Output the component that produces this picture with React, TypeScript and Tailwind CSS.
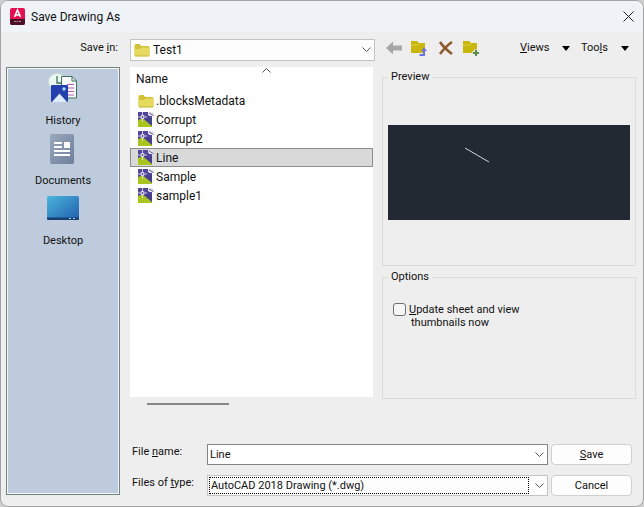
import React from 'react'

const FolderIcon: React.FC<{ className?: string }> = ({ className = '' }) => (
  <svg viewBox="0 0 16 14" className={`w-4 h-[14px] shrink-0 ${className}`} aria-hidden="true">
    <path d="M0.5 2.5Q0.5 1 2 1H5.5L7.3 3H14Q15.5 3 15.5 4.5V12Q15.5 13 14.5 13H1.5Q0.5 13 0.5 12Z" fill="#d2c235" />
    <path d="M0.5 6H6L7.8 4.4H15.5V12Q15.5 13.3 14.3 13.3H1.7Q0.5 13.3 0.5 12Z" fill="#e6da60" />
    <path d="M1 13H15" stroke="#c9b93a" strokeWidth="1" />
  </svg>
)

const DwgIcon: React.FC = () => (
  <svg viewBox="0 0 16 16" className="w-4 h-4 shrink-0" aria-hidden="true">
    <path d="M0 0H10V3H14V15H0Z" fill="#51479a" />
    <path d="M0 8L5 6.5L14 14V15H0Z" fill="#a9c41f" />
    <path d="M5 6L14 6.5V13.5Z" fill="#483f8c" />
    <path d="M4.5 0V10M0 5H9" stroke="#e9e8f4" strokeWidth="0.8" />
    <rect x="3.2" y="3.7" width="2.6" height="2.6" fill="#51479a" stroke="#fff" strokeWidth="0.8" />
    <path d="M10 0H14.5L16 1.5V4H11Z" fill="#e4e3ee" />
    <path d="M11 1L15.5 3.5" stroke="#6661a6" strokeWidth="1" />
  </svg>
)

const AppIcon: React.FC = () => (
  <svg viewBox="0 0 15 17" className="w-[15px] h-[17px]" aria-hidden="true">
    <rect width="15" height="17" rx="2" fill="#e51050" />
    <path d="M0 11H15V15Q15 17 13 17H2Q0 17 0 15Z" fill="#4c1026" />
    <path d="M4.5 9L7.5 2L10.5 9M5.5 7H9.5" fill="none" stroke="#fff" strokeWidth="1.6" />
    <path d="M4 13.5H11" stroke="#b0859a" strokeWidth="1.2" strokeDasharray="2 0.5" />
  </svg>
)

const HistoryIcon: React.FC = () => (
  <svg viewBox="0 0 32 32" className="w-8 h-8" aria-hidden="true">
    <circle cx="10" cy="9" r="8.5" fill="#eef8f3" stroke="#c8dcd8" />
    <path d="M10 3V10H14" fill="none" stroke="#3c7552" strokeWidth="1.3" />
    <path d="M14.5 3.5H25L29.5 8V25H14.5Z" fill="#f8fbfa" stroke="#39705c" />
    <path d="M25 3.5V8H29.5" fill="none" stroke="#39705c" />
    <path d="M20 11.5H27M20 15H27M20 18.5H27M20 22H27" stroke="#bc59b5" strokeWidth="1.1" />
    <rect x="4" y="12" width="17" height="17" rx="1" fill="#243fae" />
    <path d="M5 29L12.5 20.5L20 29Z" fill="#dcecfb" />
    <circle cx="17" cy="16" r="1.7" fill="#a9d7fa" />
  </svg>
)

const DocumentsIcon: React.FC = () => (
  <svg viewBox="0 0 32 32" className="w-8 h-8" aria-hidden="true">
    <defs>
      <linearGradient id="doc" x1="0" y1="0" x2="1" y2="1">
        <stop stopColor="#9aa9bd" />
        <stop offset="1" stopColor="#6f7f9c" />
      </linearGradient>
    </defs>
    <rect x="3" y="1" width="24" height="30" rx="2" fill="url(#doc)" />
    <path d="M7 10H15M7 14H15M7 18H23M7 22H23" stroke="#fff" strokeWidth="2" />
    <rect x="17" y="9" width="6" height="6" fill="#fff" />
  </svg>
)

const DesktopIcon: React.FC = () => (
  <svg viewBox="0 0 32 32" className="w-8 h-8" aria-hidden="true">
    <defs>
      <linearGradient id="desk" x1="0" y1="0" x2="1" y2="1">
        <stop stopColor="#4db4dc" />
        <stop offset="1" stopColor="#1f5fae" />
      </linearGradient>
    </defs>
    <rect x="0" y="3" width="32" height="24" rx="1.5" fill="url(#desk)" />
    <path d="M0 24.5H32V25.5Q32 27 30.5 27H1.5Q0 27 0 25.5Z" fill="#153f70" />
    <path d="M22 25.5H24M26 25.5H28" stroke="#a4d6f4" />
  </svg>
)

const Chevron: React.FC = () => (
  <svg viewBox="0 0 9 6" className="w-[9px] h-[6px]" aria-hidden="true">
    <path d="M0.5 0.5L4.5 4.5L8.5 0.5" fill="none" stroke="#555" strokeWidth="1" />
  </svg>
)

const DropArrow: React.FC = () => (
  <svg viewBox="0 0 8 5" className="w-2 h-[5px]" aria-hidden="true">
    <path d="M0 0H8L4 5Z" fill="#000" />
  </svg>
)

const places = [
  { name: 'History', icon: <HistoryIcon /> },
  { name: 'Documents', icon: <DocumentsIcon /> },
  { name: 'Desktop', icon: <DesktopIcon /> },
]

const files = [
  { name: '.blocksMetadata', folder: true },
  { name: 'Corrupt' },
  { name: 'Corrupt2' },
  { name: 'Line', selected: true },
  { name: 'Sample' },
  { name: 'sample1' },
]

const Toolbar: React.FC = () => (
  <div className="flex items-start h-[35px] pt-[7px] pr-2">
    <label htmlFor="saveIn" className="w-[129px] pr-3 pt-px text-right">
      Save <u>i</u>n:
    </label>
    <div className="relative flex-1">
      <select
        id="saveIn"
        className="block w-full h-[22px] pl-[22px] pr-6 appearance-none rounded-none bg-[#fdfdfd] border border-[#c4c4c4] text-[12px] leading-4"
      >
        <option>Test1</option>
      </select>
      <FolderIcon className="absolute left-1 top-1 pointer-events-none" />
      <span className="absolute right-1 top-2 pointer-events-none"><Chevron /></span>
    </div>
    <div className="flex items-center w-[260px] h-[18px] pl-[11px]">
      <button aria-label="Back" className="w-4">
        <svg viewBox="0 0 16 14" className="w-4 h-[14px]">
          <path d="M0 7L7 0.5V4.5H16V9.5H7V13.5Z" fill="#a7a7a7" />
        </svg>
      </button>
      <button aria-label="Up one level" className="w-4 ml-[9px]">
        <svg viewBox="0 0 16 17" className="w-4 h-[17px]">
          <path d="M0 1H6L8 3H14V13H0Z" fill="#c8b60c" />
          <path d="M0 5H7L9 3.5" stroke="#ddcd3b" fill="none" />
          <path d="M8.5 15H13V10" fill="none" stroke="#6c70e0" strokeWidth="2" />
          <path d="M10 11L13 7.5L16 11Z" fill="#6c70e0" />
        </svg>
      </button>
      <button aria-label="Delete" className="w-4 ml-[11px]">
        <svg viewBox="0 0 16 16" className="w-4 h-4">
          <path d="M2 2Q6 8 14 14M14 2Q8 6 2 14" fill="none" stroke="#8c5a2b" strokeWidth="2.6" />
        </svg>
      </button>
      <button aria-label="Create new folder" className="w-4 ml-[9px]">
        <svg viewBox="0 0 16 17" className="w-4 h-[17px]">
          <path d="M0 1H6L8 3H14V13H0Z" fill="#c8b60c" />
          <path d="M0 5H7L9 3.5" stroke="#ddcd3b" fill="none" />
          <path d="M13 9.5V16.5M9.5 13H16.5" stroke="#eeeeee" strokeWidth="4" />
          <path d="M13 10V16M10 13H16" stroke="#5c8a4a" strokeWidth="2" />
        </svg>
      </button>
      <button className="flex items-center justify-between w-[50px] ml-auto">
        <span><u>V</u>iews</span>
        <DropArrow />
      </button>
      <button className="flex items-center justify-between w-12 ml-[11px] mr-[6px]">
        <span>Too<u>l</u>s</span>
        <DropArrow />
      </button>
    </div>
  </div>
)

const FileList: React.FC = () => (
  <div className="flex-1 min-w-0">
    <div className="h-[330px] bg-white">
      <table className="w-full border-collapse text-[12px] leading-[18px]">
        <thead>
          <tr>
            <th className="relative h-6 pl-[6px] text-left font-normal">
              Name
              <span className="absolute left-1/2 top-0 ml-[10px] rotate-180"><Chevron /></span>
            </th>
          </tr>
        </thead>
        <tbody>
          {files.map((file) => (
            <tr key={file.name} className={file.selected ? 'bg-[#d9d9d9] outline outline-1 -outline-offset-1 outline-[#8c8c8c]' : ''}>
              <td className="h-[19px] p-0 pl-2">
                <div className="flex items-center gap-[2px]">
                  {file.folder ? <FolderIcon /> : <DwgIcon />}
                  <span>{file.name}</span>
                </div>
              </td>
            </tr>
          ))}
        </tbody>
      </table>
    </div>
    <div className="w-[82px] h-[2px] mt-[6px] ml-[17px] bg-[#868686]" />
  </div>
)

const SidePanels: React.FC = () => (
  <div className="w-[254px] ml-[9px] mr-[7px] pt-[3px] flex flex-col gap-1">
    <fieldset className="h-[196px] px-[5px] border border-[#dcdcdc]">
      <legend className="px-[3px] leading-[14px]">Preview</legend>
      <div className="mt-[41px] h-[95px] bg-[#222933]">
        <svg viewBox="0 0 242 95" className="w-full h-full" role="img" aria-label="Drawing preview">
          <path d="M77 23L101 37" stroke="#d5d8dc" strokeWidth="1" />
        </svg>
      </div>
    </fieldset>
    <fieldset className="h-[129px] px-[5px] border border-[#dcdcdc]">
      <legend className="px-[3px] leading-[14px]">Options</legend>
      <label className="flex gap-[3px] pt-[19px] pl-[5px] leading-[13px]">
        <input type="checkbox" className="appearance-none w-[13px] h-[13px] border border-[#707070] rounded-[3px] bg-[#f6f6f6] shrink-0" />
        <span>
          <u>U</u>pdate sheet and view
          <span className="block pl-[2px]">thumbnails now</span>
        </span>
      </label>
    </fieldset>
  </div>
)

const buttonStyle = 'w-[81px] h-[21px] bg-[#fdfdfd] border border-[#d0d0d0] rounded-[4px]'

const SaveForm: React.FC = () => (
  <div className="flex flex-col gap-[10px] pr-[11px] pb-[10px]">
    <div className="flex">
      <label htmlFor="fileName" className="w-[77px] pl-[2px] leading-4">File <u>n</u>ame:</label>
      <div className="relative flex-1">
        <input
          id="fileName"
          defaultValue="Line"
          className="block w-full h-[21px] pl-[2px] pr-6 bg-white border border-[#858585]"
        />
        <button aria-label="Show file names" className="absolute right-1 top-2"><Chevron /></button>
      </div>
      <button className={`ml-[3px] ${buttonStyle}`}><u>S</u>ave</button>
    </div>
    <div className="flex">
      <label htmlFor="fileType" className="w-[77px] pl-[2px] leading-4">Files of <u>t</u>ype:</label>
      <div className="relative flex-1">
        <select
          id="fileType"
          className="block w-full h-[21px] pl-[3px] pr-6 appearance-none rounded-none bg-[#fdfdfd] border border-[#c4c4c4]"
        >
          <option>AutoCAD 2018 Drawing (*.dwg)</option>
        </select>
        <div className="absolute left-[2px] right-[19px] top-[2px] bottom-[2px] border border-dotted border-black pointer-events-none" />
        <span className="absolute right-1 top-2 pointer-events-none"><Chevron /></span>
      </div>
      <button className={`ml-[3px] ${buttonStyle}`}>Cancel</button>
    </div>
  </div>
)

export default function App() {
  return (
    <div className="min-h-screen flex flex-col bg-[#cfcfcf] font-[Roboto,Arial,sans-serif] text-[11px] leading-4 text-[#111111]">
      <div className="flex-1 flex flex-col bg-[#eeeeee] border border-[#a3a3a3] rounded-lg overflow-hidden">
        {/* Title bar */}
        <header className="flex items-center h-[31px] pl-[9px] pr-[9px] bg-[#eff3f8]">
          <AppIcon />
          <h1 className="flex-1 pl-[6px] text-[12px]">Save Drawing As</h1>
          <button aria-label="Close">
            <svg viewBox="0 0 11 11" className="w-[11px] h-[11px]">
              <path d="M0.5 0.5L10.5 10.5M10.5 0.5L0.5 10.5" stroke="#222" strokeWidth="1" />
            </svg>
          </button>
        </header>

        <Toolbar />

        <div className="flex-1 flex">
          {/* Places */}
          <nav className="w-[114px] ml-[5px] mb-[11px] pt-[5px] bg-[#becbdc] border border-[#71827f] shadow-[inset_0_0_0_1px_#f2f6f8]">
            {places.map((place) => (
              <button key={place.name} className="flex flex-col items-center w-full h-[60px] gap-2">
                {place.icon}
                <span>{place.name}</span>
              </button>
            ))}
          </nav>

          <main className="flex-1 min-w-0 ml-[10px] flex flex-col justify-between">
            <div className="flex">
              <FileList />
              <SidePanels />
            </div>
            <SaveForm />
          </main>
        </div>
      </div>
    </div>
  )
}
